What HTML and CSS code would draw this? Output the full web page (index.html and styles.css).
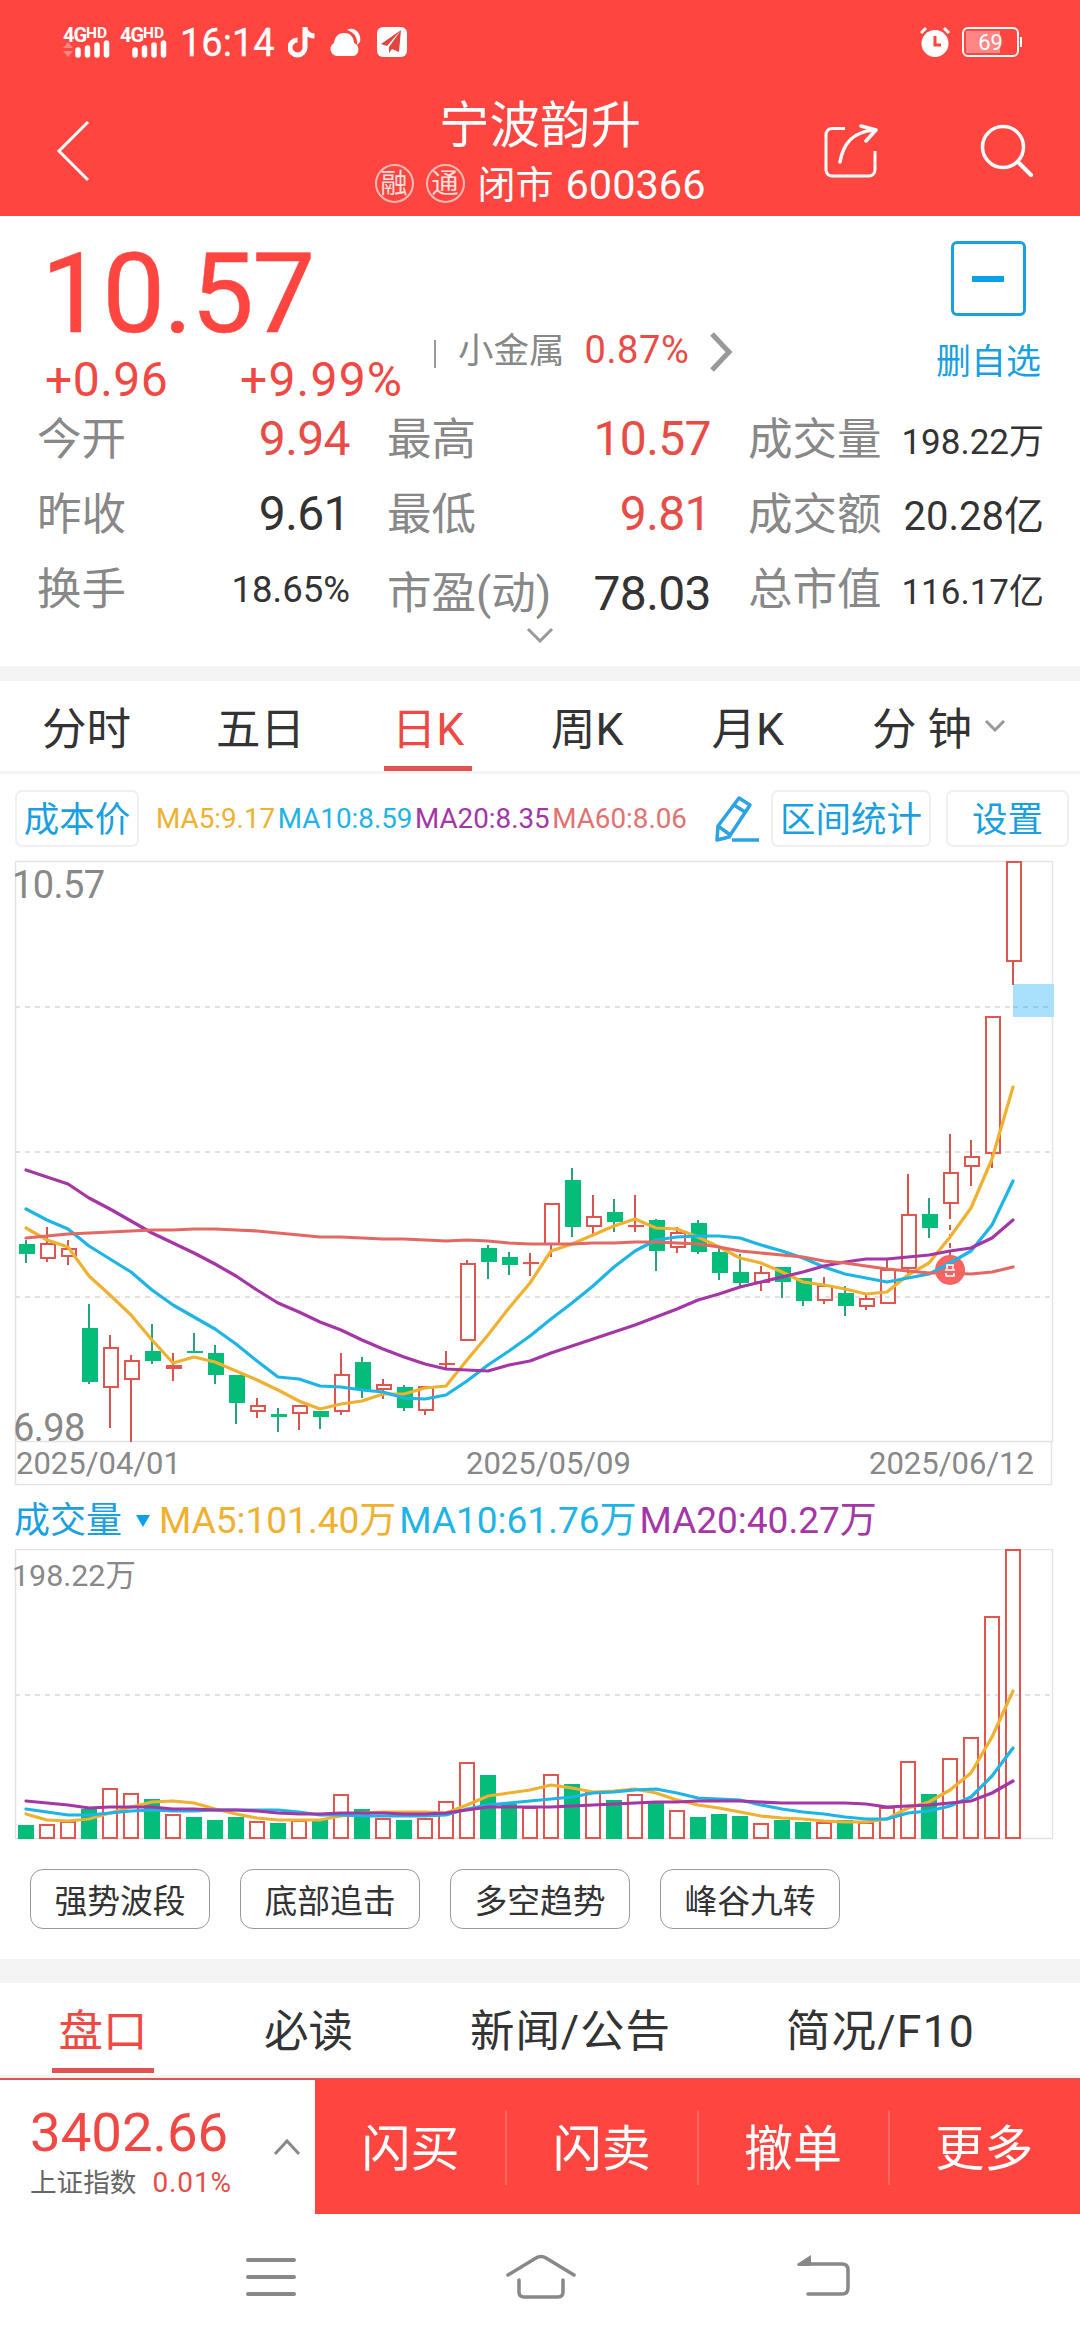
FILE: index.html
```html
<!DOCTYPE html>
<html lang="zh-CN">
<head>
    <meta charset="UTF-8">
    <meta name="viewport" content="width=device-width, initial-scale=1.0">
    <title>宁波韵升 600366</title>
    <link rel="stylesheet" href="styles.css">
</head>
<body>
    <header class="header">
        <div class="status-bar">
            <div class="network">
                <div class="net-label">4G<sup>HD</sup></div>
                <svg width="48" height="18" viewBox="0 0 48 18">
                    <path d="M0 8l5-6 5 6zM0 11l5 6 5-6z" fill="#ff8580"/>
                    <path d="M15 10v5M24.500 8v7M34 5v10M43.500 3v12" stroke="#fff" stroke-width="5.500" stroke-linecap="round"/>
                </svg>
            </div>
            <div class="network">
                <div class="net-label">4G<sup>HD</sup></div>
                <svg width="48" height="18" viewBox="0 0 48 18">
                    <path d="M15 10v5M24.500 8v7M34 5v10M43.500 3v12" stroke="#fff" stroke-width="5.500" stroke-linecap="round"/>
                </svg>
            </div>
            <span class="time">16:14</span>
            <svg class="st-music" width="28" height="32" viewBox="0 0 28 32">
                <path d="M17 1v20.500a7.500 7.500 0 1 1-7.500-7.500M17 1c0 5 4 9 9.500 9" fill="none" stroke="#fff" stroke-width="5"/>
            </svg>
            <svg class="st-cloud" width="32" height="30" viewBox="0 0 32 30">
                <path d="M7 29a7 7 0 0 1-3-13C5 9 9 6 14 6c7 0 10 5 10 10a7 7 0 0 1 0 13z" fill="#fff"/>
                <path d="M17 3c7-4 15 3 13 12l-3 3c1-9-4-13-10-15z" fill="#fff"/>
            </svg>
            <svg class="st-plane" width="30" height="30" viewBox="0 0 30 30">
                <rect width="30" height="30" rx="6" fill="#fff"/>
                <path d="M24 3L4 17l6 2zM24 3L12 20v6l3-4 7 3z" fill="#e0453f"/>
            </svg>
            <svg class="st-alarm" width="30" height="30" viewBox="0 0 30 30">
                <circle cx="15" cy="16.500" r="13.500" fill="#fff"/>
                <path d="M1 6l5-5M29 6l-5-5" stroke="#fff" stroke-width="3"/>
                <path d="M15 9v9h6" fill="none" stroke="#ff4540" stroke-width="3"/>
            </svg>
            <div class="battery"><span>69</span></div>
        </div>
        <div class="title-bar">
            <div class="side">
                <svg class="back" width="34" height="62" viewBox="0 0 34 62">
                    <path d="M32 2L3 31l29 29" fill="none" stroke="#fff" stroke-width="3"/>
                </svg>
            </div>
            <div class="title">
                <h1>宁波韵升</h1>
                <div class="sub">
                    <i>融</i><i>通</i><span>闭市</span><b>600366</b>
                </div>
            </div>
            <div class="side right">
                <svg width="54" height="54" viewBox="0 0 54 54">
                    <path d="M21 4.500H8a6 6 0 0 0-6 6V46a6 6 0 0 0 6 6h37a6 6 0 0 0 6-6V27" fill="none" stroke="#fff" stroke-width="3"/>
                    <path d="M16 38C19 20 28 8 50 6M37 2l15 4-10 11" fill="none" stroke="#fff" stroke-width="3.500" stroke-linecap="round" stroke-linejoin="round"/>
                </svg>
                <svg width="54" height="54" viewBox="0 0 54 54">
                    <circle cx="23" cy="23" r="20.500" fill="none" stroke="#fff" stroke-width="3.500"/>
                    <path d="M38 38l13 13" stroke="#fff" stroke-width="4" stroke-linecap="round"/>
                </svg>
            </div>
        </div>
    </header>

    <section class="quote">
        <div class="price-box">
            <div class="price">10.57</div>
            <div class="change"><span>+0.96</span><span>+9.99%</span></div>
        </div>
        <div class="sector">
            <span class="bar"></span>
            <span class="name">小金属</span>
            <span class="pct">0.87%</span>
            <svg width="24" height="40" viewBox="0 0 24 40">
                <path d="M3 2l17 18L3 38" fill="none" stroke="#999" stroke-width="5"/>
            </svg>
        </div>
        <div class="watch">
            <div class="minus"></div>
            <span>删自选</span>
        </div>
    </section>

    <section class="stats">
        <div class="cell"><span>今开</span><b class="red">9.94</b></div>
        <div class="cell"><span>最高</span><b class="red">10.57</b></div>
        <div class="cell"><span>成交量</span><b class="small">198.22万</b></div>
        <div class="cell"><span>昨收</span><b>9.61</b></div>
        <div class="cell"><span>最低</span><b class="red">9.81</b></div>
        <div class="cell"><span>成交额</span><b class="mid">20.28亿</b></div>
        <div class="cell"><span>换手</span><b class="small rate">18.65%</b></div>
        <div class="cell low"><span>市盈(动)</span><b>78.03</b></div>
        <div class="cell"><span>总市值</span><b class="small">116.17亿</b></div>
    </section>
    <div class="expand">
        <svg width="28" height="16" viewBox="0 0 28 16">
            <path d="M2 2l12 12L26 2" fill="none" stroke="#999" stroke-width="3"/>
        </svg>
    </div>

    <nav class="tabs">
        <span>分时</span>
        <span>五日</span>
        <span class="active">日K</span>
        <span>周K</span>
        <span>月K</span>
        <span>分 钟</span>
        <svg width="22" height="12" viewBox="0 0 22 12">
            <path d="M2 1l9 9 9-9" fill="none" stroke="#999" stroke-width="3"/>
        </svg>
    </nav>

    <div class="tools">
        <div class="btn cost">成本价</div>
        <div class="ma">
            <span class="ma5">MA5:9.17</span>
            <span class="ma10">MA10:8.59</span>
            <span class="ma20">MA20:8.35</span>
            <span class="ma60">MA60:8.06</span>
        </div>
        <svg class="pen" width="46" height="48" viewBox="0 0 46 48" fill="none" stroke="#2ba3e4" stroke-width="3.500" stroke-linejoin="round">
            <path d="M25 3l11 7-21 32-12 3 1-14zM20 10l11 7M4 31l11 8"/>
            <path d="M18 45h27"/>
        </svg>
        <div class="btn range">区间统计</div>
        <div class="btn set">设置</div>
    </div>

    <div class="chart">
        <svg id="kline" width="1080" height="626" viewBox="0 0 1080 626">
            <g class="frame">
                <path d="M15.500 1.500H1052.500V581.500H15.500zM15.500 581.500V624.500H1051.500V581.500"/>
            </g>
            <path class="grid" d="M15 147H1052M15 292H1052M15 437H1052"/>
            <text x="12" y="38" class="axis">10.57</text>
            <text x="13" y="581" class="axis">6.98</text>
            <text x="16" y="614" class="date">2025/04/01</text>
            <text x="466" y="614" class="date">2025/05/09</text>
            <text x="869" y="614" class="date">2025/06/12</text>
            <rect x="1013" y="124" width="41" height="33" fill="#a9e1fd"/>
            <path d="M1013 147H1052" stroke="#97cbe5" stroke-width="2" stroke-dasharray="5 5"/>
        </svg>
    </div>

    <div class="vol-head">
        <span class="vol-name">成交量</span>
        <i class="arrow"></i>
        <span class="ma5">MA5:101.40万</span>
        <span class="ma10">MA10:61.76万</span>
        <span class="ma20">MA20:40.27万</span>
    </div>
    <div class="chart">
        <svg id="volume" width="1080" height="292" viewBox="0 0 1080 292">
            <g class="frame">
                <path d="M15.500 .5H1052.500V289.500H15.500z"/>
            </g>
            <path class="grid" d="M15 146H1052"/>
            <text x="12" y="37" class="vol-label">198.22万</text>
        </svg>
    </div>

    <div class="chips">
        <span>强势波段</span>
        <span>底部追击</span>
        <span>多空趋势</span>
        <span>峰谷九转</span>
    </div>

    <nav class="info-tabs">
        <span class="active">盘口</span>
        <span>必读</span>
        <span>新闻/公告</span>
        <span>简况/F10</span>
    </nav>

    <footer class="trade">
        <div class="index">
            <div>
                <div class="index-value">3402.66</div>
                <div class="index-name">上证指数<em>0.01%</em></div>
            </div>
            <svg width="28" height="18" viewBox="0 0 28 18">
                <path d="M2 16L14 3l12 13" fill="none" stroke="#888" stroke-width="3"/>
            </svg>
        </div>
        <div class="action">闪买</div>
        <div class="action">闪卖</div>
        <div class="action">撤单</div>
        <div class="action">更多</div>
    </footer>

    <div class="sys-nav">
        <svg width="52" height="46" viewBox="0 0 52 46">
            <path d="M3 6h46M3 23h46M3 40h46" stroke="#888" stroke-width="4" stroke-linecap="round"/>
        </svg>
        <svg class="home" width="72" height="46" viewBox="0 0 72 46" fill="none" stroke="#888" stroke-width="3.500" stroke-linecap="round">
            <path d="M3 21L31 4q5-3 10 0l28 17"/>
            <path d="M14 26v12q0 5 5 5h34q5 0 5-5V26"/>
        </svg>
        <svg width="56" height="46" viewBox="0 0 56 46">
            <path d="M8 10h38q6 0 6 6v18q0 6-6 6H12" fill="none" stroke="#888" stroke-width="3.500" stroke-linecap="round"/>
            <path d="M1 10l14-9v11H2z" fill="#888"/>
        </svg>
    </div>

    <script src="chart.js"></script>
</body>
</html>
```
FILE: styles.css
```css
* {
    box-sizing: border-box;
}
body {
    margin: 0;
    width: 1080px;
    height: 2340px;
    overflow: hidden;
    background-color: #fff;
    color: #333;
    font-family: Roboto, "Noto Sans CJK SC", sans-serif;
    line-height: 1;
}
svg {
    display: block;
    flex: none;
}
b, i, em {
    font-weight: normal;
    font-style: normal;
}
span {
    white-space: nowrap;
}

/* 顶部 */
.header {
    height: 216px;
    background-color: #ff4540;
    color: #fff;
}
.status-bar {
    display: flex;
    align-items: center;
    height: 84px;
    padding: 0 61px 0 63px;
}
.network {
    width: 57px;
    height: 34px;
}
.net-label {
    height: 15px;
    font-size: 20px;
    font-weight: bold;
    letter-spacing: -1px;
}
.net-label sup {
    font-size: 15.5px;
    line-height: 0;
    vertical-align: 4px;
    letter-spacing: 0;
}
.time {
    margin-left: 3px;
    width: 108px;
    padding-top: 1px;
    font-size: 38px;
    -webkit-text-stroke: 0.3px #fff;
}
.st-cloud {
    margin-left: 14px;
}
.st-plane {
    margin-left: 15px;
}
.st-alarm {
    margin-left: auto;
}
.battery {
    position: relative;
    width: 57px;
    height: 30px;
    margin-left: 12px;
    border: 2px solid #fff;
    border-radius: 6px;
    background: linear-gradient(90deg, #ff8682 69%, transparent 69%) 2px 2px / 49px 22px no-repeat;
    font-size: 22px;
    text-align: center;
    line-height: 27px;
}
.battery::after {
    content: "";
    position: absolute;
    right: -5px;
    top: 8px;
    width: 2px;
    height: 10px;
    background-color: #fff;
}
.title-bar {
    display: flex;
    justify-content: space-between;
    height: 132px;
}
.side {
    width: 270px;
    padding: 36px 0 0 56px;
}
.side.right {
    display: flex;
    justify-content: space-between;
    padding: 40px 46px 0 14px;
}
.title {
    text-align: center;
}
h1 {
    margin: 17px 0 0;
    font-size: 50.5px;
    font-weight: normal;
}
.sub {
    display: flex;
    justify-content: center;
    align-items: center;
    margin-top: 12px;
    height: 40px;
}
.sub i {
    width: 39px;
    height: 39px;
    margin-right: 12px;
    border: 2px solid #ffb9b6;
    border-radius: 50%;
    font-size: 27px;
    line-height: 36px;
    color: #ffe0df;
}
.sub span {
    margin: 0 12px 0 1px;
    padding-top: 3px;
    font-size: 38px;
}
.sub b {
    padding-top: 2px;
    font-size: 41.5px;
}

/* 报价 */
.quote {
    display: flex;
    height: 185px;
    padding: 22px 39px 0 41px;
}
.price-box {
    width: 392px;
    color: #ff4540;
}
.price {
    height: 118px;
    font-size: 112px;
    letter-spacing: -1.8px;
    -webkit-text-stroke: 0.5px #ff4540;
}
.change {
    display: flex;
    margin-left: 4px;
    font-size: 48px;
    letter-spacing: 0.5px;
    color: #f04843;
}
.change span:first-child {
    width: 195px;
}
.change span:last-child {
    letter-spacing: 1.2px;
}
.sector {
    display: flex;
    align-items: center;
    height: 40px;
    margin-top: 94px;
}
.sector .bar {
    width: 2px;
    height: 28px;
    margin: 4px 22px 0 1px;
    background-color: #999;
}
.sector .name {
    margin-right: 20px;
    font-size: 35.5px;
    color: #888;
}
.sector .pct {
    margin: -5px 20px 0 0;
    font-size: 38px;
    letter-spacing: 0.6px;
    color: #e84c46;
}
.watch {
    display: flex;
    flex-direction: column;
    align-items: center;
    margin-left: auto;
    padding-top: 3px;
    font-size: 35px;
    color: #1a9fe0;
}
.minus {
    display: flex;
    align-items: center;
    justify-content: center;
    width: 75px;
    height: 75px;
    margin-bottom: 29px;
    border: 3px solid #1a9fe0;
    border-radius: 6px;
}
.minus::before {
    content: "";
    width: 32px;
    height: 6px;
    background-color: #0ba0ea;
}
.stats {
    display: grid;
    grid-template-columns: 313px 324px 296px;
    grid-auto-rows: 75px;
    column-gap: 37px;
    padding-left: 37px;
}
.stats .cell {
    display: flex;
    justify-content: space-between;
    align-items: center;
}
.stats .cell.low {
    padding-top: 9px;
}
.cell span {
    padding-top: 3px;
    font-size: 44.5px;
    color: #888;
}
.cell b {
    padding-top: 1px;
    font-size: 48px;
    letter-spacing: -0.6px;
}
.cell .red {
    color: #e84c46;
}
.cell .small {
    padding-top: 7px;
    font-size: 35px;
    letter-spacing: 0;
}
.cell .mid {
    padding-top: 7px;
    font-size: 40px;
    letter-spacing: 0;
}
.cell .rate {
    padding-top: 3px;
    font-size: 36.5px;
}
.expand {
    display: flex;
    justify-content: center;
    height: 55px;
    padding-top: 1px;
    border-bottom: 15px solid #f4f4f4;
}

/* 周期切换 */
.tabs {
    display: flex;
    align-items: center;
    height: 93px;
    padding-left: 42px;
    border-bottom: 3px solid #f3f3f3;
    font-size: 44.5px;
}
.tabs span {
    display: flex;
    flex: none;
    align-items: center;
    height: 90px;
    margin-right: 88px;
    padding-top: 9px;
    white-space: pre;
}
.tabs span:first-child {
    margin-right: 85px;
}
.tabs span:nth-child(2) {
    margin-right: 79px;
}
.tabs .active {
    justify-content: center;
    width: 88px;
    margin-right: 79px;
    padding-top: 13px;
    border-bottom: 5px solid #e05350;
    color: #f04843;
}
.tabs span:nth-child(6) {
    margin-right: 12px;
}
.tools {
    display: flex;
    align-items: center;
    height: 86px;
    padding: 3px 11px 0 15px;
}
.btn {
    height: 57px;
    padding-top: 2px;
    border: 2px solid #f0f0f0;
    border-radius: 7px;
    font-size: 35.5px;
    line-height: 53px;
    text-align: center;
    color: #1a9fe0;
}
.cost {
    width: 124px;
}
.ma {
    display: flex;
    width: 531px;
    margin-left: 17px;
    padding-top: 1px;
    justify-content: space-between;
    font-size: 27.8px;
}
.ma5 {
    color: #f0b030;
}
.ma10 {
    color: #1eb4e6;
}
.ma20 {
    color: #a436a6;
}
.ma60 {
    color: #e27270;
}
.pen {
    margin: 0 11px 0 27px;
}
.range {
    width: 160px;
}
.set {
    width: 123px;
    margin-left: auto;
}

/* 图表 */
.frame path {
    fill: none;
    stroke: #e4e4e4;
    stroke-width: 1.5;
}
.grid {
    fill: none;
    stroke: #e2e2e2;
    stroke-width: 2;
    stroke-dasharray: 5 5;
}
text {
    fill: #888;
}
.axis {
    font-size: 38px;
    letter-spacing: -0.6px;
}
.date {
    font-size: 31px;
}
.vol-label {
    font-size: 30.4px;
}
.up {
    fill: none;
    stroke: #e2554f;
    stroke-width: 2;
}
.down {
    fill: #04bd7a;
    stroke: none;
}
.wick-up {
    stroke: #d9544f;
    stroke-width: 2;
}
.wick-down {
    stroke: #25a379;
    stroke-width: 2;
}
.line {
    fill: none;
    stroke-width: 3.2;
    stroke-linejoin: round;
    stroke-linecap: round;
}
.vol-head {
    display: flex;
    align-items: center;
    height: 63px;
    padding: 6px 0 0 14px;
    font-size: 37px;
}
.vol-name {
    width: 122px;
    font-size: 36px;
    color: #1a9fe0;
}
.arrow {
    width: 14px;
    margin-right: 9px;
    border: 7px solid transparent;
    border-top: 12px solid #0ba0ea;
    border-bottom: 0;
}
.vol-head .ma5, .vol-head .ma10 {
    margin-right: 3px;
}
.chips {
    display: flex;
    gap: 30px;
    height: 142px;
    padding: 28px 30px 0;
    border-bottom: 24px solid #f4f4f4;
}
.chips span {
    width: 180px;
    height: 60px;
    border: 1.5px solid #999;
    border-radius: 13px;
    font-size: 32.8px;
    line-height: 64px;
    text-align: center;
}

/* 底部 */
.info-tabs {
    display: flex;
    height: 95px;
    padding-left: 52px;
    border-bottom: 3px solid #f3f3f3;
    font-size: 44.5px;
}
.info-tabs span {
    flex: none;
    height: 90px;
    margin-right: 117px;
    line-height: 99px;
}
.info-tabs span:nth-child(3) {
    letter-spacing: 0.9px;
    margin-right: 115px;
}
.info-tabs span:nth-child(4) {
    margin-right: 0;
    letter-spacing: 1.2px;
}
.info-tabs .active {
    width: 102px;
    margin-right: 110px;
    text-align: center;
    border-bottom: 5px solid #e05350;
    color: #f04843;
}
.trade {
    display: flex;
    height: 137px;
    padding-bottom: 1px;
    border-top: 2px solid #e0534f;
}
.index {
    display: flex;
    justify-content: space-between;
    width: 315px;
    padding: 25px 14px 0 30px;
    color: #f04843;
}
.index-value {
    font-size: 54.5px;
}
.index-name {
    margin-top: 9px;
    font-size: 26.6px;
    color: #666;
}
.index-name em {
    margin-left: 16px;
    font-size: 28px;
    letter-spacing: 0.9px;
    color: #e84c46;
}
.index svg {
    margin-top: 33px;
}
.action {
    position: relative;
    flex: 1;
    background-color: #ff4540;
    font-size: 49px;
    line-height: 140px;
    text-align: center;
    color: #fff;
}
.action + .action::before {
    content: "";
    position: absolute;
    left: -1px;
    top: 30px;
    width: 2px;
    height: 75px;
    background-color: #ff6661;
}
.sys-nav {
    display: flex;
    justify-content: space-between;
    padding: 39px 228px 0 245px;
}
.home {
    margin-right: 11px;
}
```
FILE: chart.js
```js
const NS = 'http://www.w3.org/2000/svg';
const STEP = 21;
const LEFT = 26;

// [涨跌, 最高, 实体上, 实体下, 最低]
const candles = [
    [0, 380, 384, 394, 403], [1, 367, 384, 398, 402], [1, 380, 389, 396, 405], [0, 444, 468, 522, 524],
    [1, 475, 488, 527, 568], [1, 495, 501, 519, 582], [0, 464, 491, 501, 504], [1, 493, 506, 508, 521],
    [0, 473, 491, 493, 493], [0, 485, 493, 515, 524], [0, 515, 515, 543, 564], [1, 538, 546, 551, 558],
    [0, 548, 554, 557, 572], [1, 546, 546, 553, 570], [0, 551, 551, 557, 569], [1, 493, 515, 551, 555],
    [0, 497, 502, 530, 538], [1, 519, 525, 529, 539], [0, 525, 527, 548, 551], [1, 527, 527, 550, 555],
    [1, 491, 504, 504, 509], [1, 400, 404, 480, 480], [0, 385, 388, 402, 419], [0, 392, 397, 405, 415],
    [1, 393, 403, 403, 416], [1, 343, 344, 384, 397], [0, 308, 320, 367, 377], [1, 335, 357, 366, 376],
    [0, 339, 352, 362, 372], [1, 335, 366, 366, 372], [0, 359, 360, 391, 411], [1, 367, 373, 387, 393],
    [0, 360, 363, 392, 394], [0, 388, 392, 413, 420], [0, 394, 412, 423, 427], [1, 406, 413, 422, 431],
    [0, 407, 407, 422, 438], [0, 418, 418, 441, 446], [1, 417, 426, 440, 444], [0, 426, 433, 446, 456],
    [1, 435, 439, 446, 450], [1, 400, 410, 443, 443], [1, 314, 355, 408, 414], [0, 338, 354, 368, 378],
    [1, 274, 313, 343, 359], [1, 280, 297, 306, 326], [1, 157, 157, 293, 308], [1, 2, 2, 101, 125]
];

const volumes = [
    276, 276, 273, 260, 240, 245, 250, 266, 268, 271, 268, 273, 274, 272, 271, 246,
    260, 270, 271, 270, 253, 214, 226, 255, 259, 226, 235, 244, 251, 246, 254, 262,
    268, 265, 267, 275, 271, 273, 274, 271, 274, 259, 213, 245, 210, 189, 68, 1
];

const klineMA = {
    '#f0b030': [368, 380, 387, 416, 435, 455, 480, 503, 497, 502, 511, 520, 530, 541, 549, 544, 541, 534, 534, 528, 526, 500, 475, 448, 423, 391, 384, 375, 366, 359, 368, 369, 377, 387, 398, 403, 412, 422, 425, 429, 434, 432, 415, 403, 377, 348, 299, 227],
    '#1eb4e6': [349, 360, 369, 386, 399, 412, 430, 445, 457, 469, 484, 501, 517, 519, 526, 527, 530, 532, 538, 539, 535, 521, 505, 491, 476, 459, 443, 426, 407, 391, 380, 377, 376, 376, 378, 385, 391, 398, 407, 414, 418, 422, 418, 414, 403, 391, 365, 321],
    '#a436a6': [310, 317, 324, 338, 349, 361, 373, 383, 393, 404, 416, 430, 443, 452, 462, 470, 480, 489, 497, 504, 509, 510, 511, 505, 501, 493, 486, 479, 472, 465, 457, 449, 440, 434, 427, 422, 417, 412, 406, 402, 399, 399, 397, 395, 391, 388, 378, 360],
    '#e26864': [378, 376, 374, 373, 372, 371, 370, 370, 369, 369, 370, 371, 373, 375, 377, 377, 378, 379, 379, 380, 381, 380, 381, 383, 384, 384, 384, 383, 383, 382, 382, 383, 384, 387, 391, 393, 395, 397, 401, 403, 406, 409, 411, 413, 413, 414, 412, 407]
};

const volumeMA = {
    '#f0b030': [265, 271, 272, 270, 264, 258, 253, 252, 254, 260, 265, 269, 271, 271, 271, 267, 264, 263, 263, 263, 264, 256, 247, 244, 241, 236, 239, 243, 242, 240, 244, 251, 256, 259, 263, 267, 269, 270, 272, 273, 273, 270, 259, 253, 241, 224, 188, 142],
    '#1eb4e6': [260, 263, 266, 266, 264, 262, 261, 262, 262, 261, 261, 261, 261, 263, 266, 266, 267, 267, 267, 267, 266, 260, 256, 254, 252, 250, 248, 244, 243, 241, 240, 244, 249, 250, 251, 256, 260, 263, 265, 268, 270, 270, 264, 262, 257, 248, 227, 199],
    '#a436a6': [252, 254, 256, 259, 258, 258, 258, 260, 260, 261, 261, 262, 264, 265, 265, 264, 264, 264, 265, 265, 264, 261, 258, 258, 258, 258, 257, 256, 255, 254, 253, 253, 252, 252, 252, 253, 254, 254, 254, 254, 255, 258, 257, 256, 254, 252, 244, 232]
};

function add(parent, tag, attrs) {
    const el = document.createElementNS(NS, tag);
    for (const key in attrs) el.setAttribute(key, attrs[key]);
    parent.appendChild(el);
    return el;
}

function drawBody(svg, x, top, bottom, up) {
    if (up) {
        add(svg, 'rect', { class: 'up', x: x - 6, y: top, width: 14, height: Math.max(bottom - top, 0.1) });
    } else {
        add(svg, 'rect', { class: 'down', x: x - 7, y: top, width: 16, height: bottom - top });
    }
}

function drawLines(svg, lines) {
    for (const color in lines) {
        const points = lines[color].map((y, i) => `${LEFT + i * STEP},${y}`).join(' ');
        add(svg, 'polyline', { class: 'line', stroke: color, points });
    }
}

const kline = document.getElementById('kline');
candles.forEach(([up, high, top, bottom, low], i) => {
    const x = LEFT + i * STEP;
    add(kline, 'path', { class: up ? 'wick-up' : 'wick-down', d: `M${x} ${high}V${top}M${x} ${bottom}V${low}` });
    drawBody(kline, x, top, bottom, up);
});

// 事件标记
add(kline, 'path', { class: 'wick-up', 'stroke-dasharray': '5 4', d: 'M950 365V398' });
add(kline, 'circle', { cx: 950, cy: 410, r: 15, fill: '#ff625f' });
drawLines(kline, klineMA);
add(kline, 'path', { d: 'M947 409v-4h6v4M945 410h10M946 413v3h8v-3', fill: 'none', stroke: '#fff', 'stroke-width': 1.5 });

const volume = document.getElementById('volume');
volumes.forEach((top, i) => {
    const up = candles[i][0];
    drawBody(volume, LEFT - 1 + i * STEP, top, up ? 289 : 290, up);
});
drawLines(volume, volumeMA);
```
